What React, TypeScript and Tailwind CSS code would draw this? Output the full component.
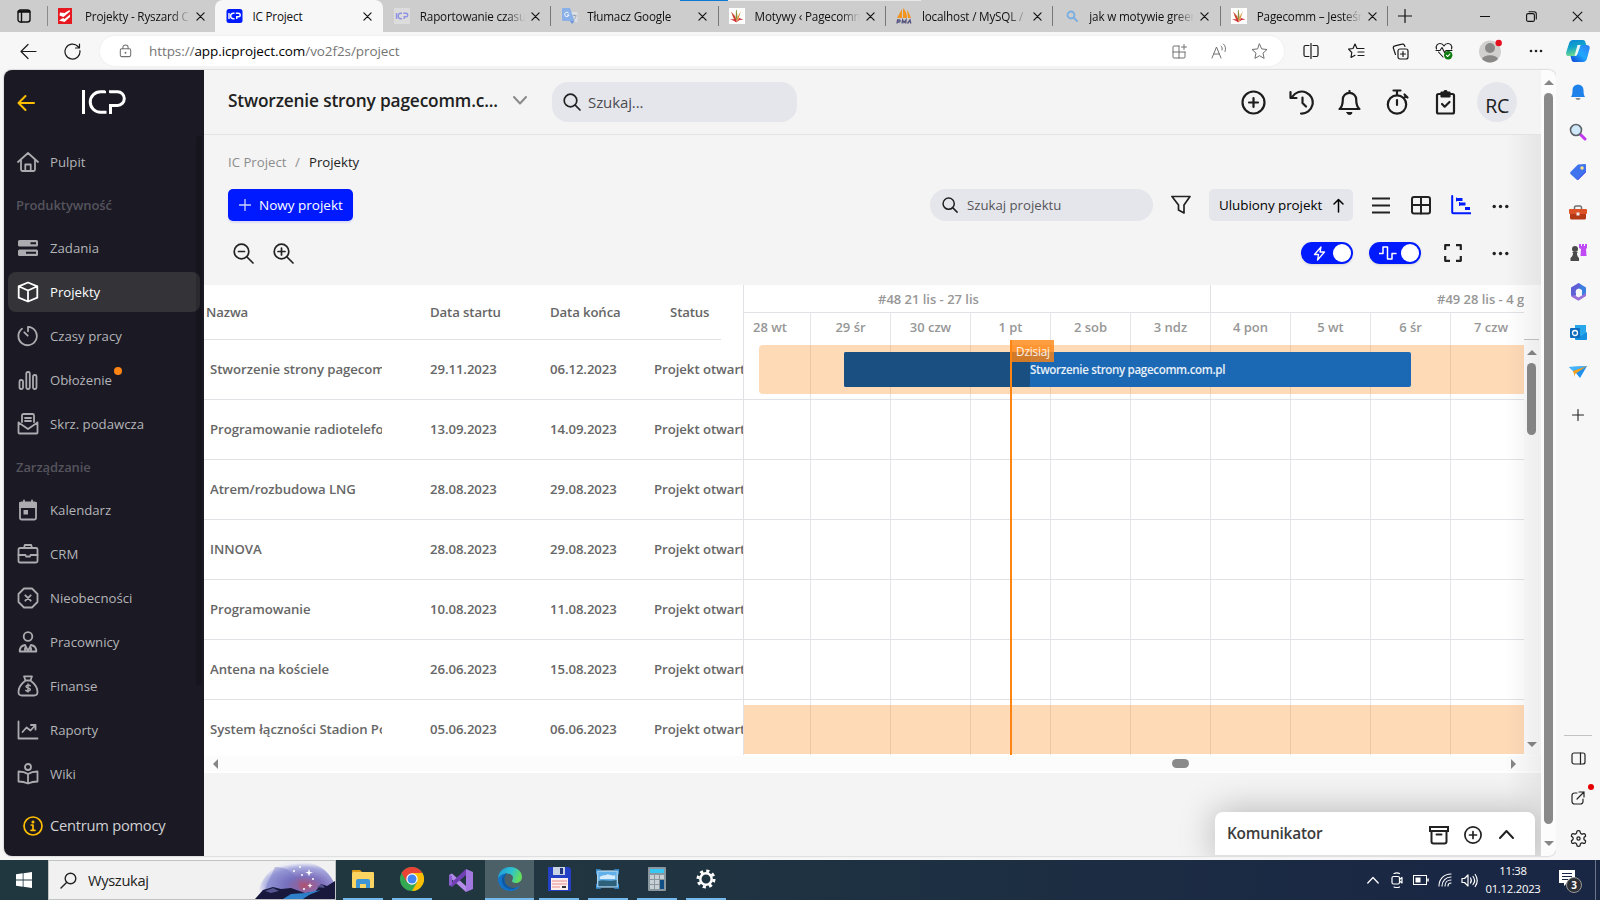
import type { ReactNode } from 'react';

type IconProps = { size?: number; w?: number; vb?: number; className?: string; children: ReactNode };

function Icon({ size = 24, w = 2, vb = 24, className = '', children }: IconProps) {
  return (
    <svg
      width={size}
      height={size}
      viewBox={`0 0 ${vb} ${vb}`}
      fill="none"
      stroke="currentColor"
      strokeWidth={w}
      strokeLinecap="round"
      strokeLinejoin="round"
      className={`shrink-0 ${className}`}
    >
      {children}
    </svg>
  );
}

const Close = ({ size = 10, w = 1.3 }: { size?: number; w?: number }) => (
  <Icon size={size} vb={10} w={w}>
    <path d="M1 1l8 8M9 1l-8 8" />
  </Icon>
);

function Bird() {
  return (
    <svg width="16" height="16" viewBox="0 0 16 16" className="shrink-0">
      <rect width="16" height="16" fill="#fff" />
      <path d="M2 3.500l4 4.500 1.500 4-1 2L4 9z" fill="#c8452f" />
      <path d="M7 1.500l.8 1L8.500 9l-.8 4-1-4z" fill="#8a8f3c" />
      <path d="M12 3l-3 9-1.500 2 1-5z" fill="#e0902c" />
      <path d="M1 11l6 .500 1 3-3-1.500zM8 14l2-4 4.500 1.500-4 .5z" fill="#d02c2c" />
    </svg>
  );
}

function IcpMark({ stroke }: { stroke: string }) {
  return (
    <g fill="none" stroke={stroke} strokeWidth="1.400">
      <path d="M2.500 5v6M8 5.200H6.900a2.800 2.800 0 000 5.600H8M9.300 5.200h2.600a1.800 1.800 0 010 3.600h-1.700V11" />
    </g>
  );
}

const favicons: Record<string, ReactNode> = {
  red: (
    <svg width="15" height="16" viewBox="0 0 15 16" className="-ml-[2px] shrink-0">
      <rect width="14" height="16" fill="#e5191f" />
      <path d="M1.500 7.500l4 1.500L12 3.500 11.500 2 6.500 5 2 4.500zM1 12.500l4-2.500 1.500 1L12 6.500V9l-5.500 5z" fill="#fff" />
    </svg>
  ),
  icp: (
    <svg width="17" height="14" viewBox="0 1 16 14" className="-ml-px shrink-0">
      <rect y="1" width="16" height="14" rx="2.500" fill="#001aff" />
      <IcpMark stroke="#fff" />
    </svg>
  ),
  icpFaded: (
    <svg width="16" height="16" viewBox="0 0 16 16" className="shrink-0">
      <rect width="16" height="16" fill="#dcdcdc" />
      <IcpMark stroke="#8f93e0" />
    </svg>
  ),
  translate: (
    <svg width="16" height="16" viewBox="0 0 16 16" className="shrink-0">
      <path d="M6 4h9.500v10H10z" fill="#dcdfe3" />
      <path d="M1 0h7l4.500 13H1.500A1.500 1.500 0 010 11.500V1a1 1 0 011-1z" fill="#8ab0ea" />
      <path d="M8 13h4.500L10 16z" fill="#6f93d6" />
      <path d="M6.800 5.400A2.200 2.200 0 107 7H5" stroke="#fff" fill="none" />
      <path d="M10.800 7.500h3.700M12.500 6.500v1M14 8c-.5 2-1.500 3-2 3.500" stroke="#9aa7b5" fill="none" />
    </svg>
  ),
  bird: <Bird />,
  pma: (
    <svg width="16" height="16" viewBox="0 0 16 16" className="shrink-0">
      <path d="M6 1v9H1zM7 0c3 3 4 6 4 10H7zM11 2c2 3 3 5 4 8h-3z" fill="#f3941f" />
      <path d="M1 15.500l.6-3.500h1.600c1.500 0 1.300 2-.4 2H1.500M6 15.500l.6-3.500 1.400 2.500 2-2.500-.2 3.500M11.500 15.500l2.500-3.500.8 3.500" stroke="#54517c" strokeWidth="1.300" fill="none" />
    </svg>
  ),
  search: (
    <Icon size={12} vb={12} w={1.8} className="mx-[2px] text-[#78aee0]">
      <circle cx="5" cy="5" r="3.500" />
      <path d="M8 8l3 3" />
    </Icon>
  ),
};

const tabs = [
  { icon: 'red', title: 'Projekty - Ryszard Ceglarz' },
  { icon: 'icp', title: 'IC Project', active: true },
  { icon: 'icpFaded', title: 'Raportowanie czasu pracy' },
  { icon: 'translate', title: 'Tłumacz Google' },
  { icon: 'bird', title: 'Motywy ‹ Pagecomm' },
  { icon: 'pma', title: 'localhost / MySQL / baza' },
  { icon: 'search', title: 'jak w motywie green' },
  { icon: 'bird', title: 'Pagecomm – Jesteśmy' },
];

function TabStrip() {
  return (
    <div className="relative flex h-8 shrink-0 bg-[#cdcdcd] text-[#111]">
      <div className="flex w-[47px] items-center justify-center">
        <Icon size={14} vb={14} w={1.4}>
          <rect x="1" y="1" width="12" height="12" rx="2.500" />
          <path d="M1 3h12M4.500 3v10M1.500 2h11" />
        </Icon>
      </div>
      <div className="mt-[6px] h-5 w-px bg-[#8a8a8a]" />
      {tabs.map((t, i) => (
        <div
          key={i}
          className={`flex h-8 w-[167.400px] shrink-0 items-center pl-[11.500px] ${
            t.active ? 'rounded-t-lg bg-[#f7f7f7]' : ''
          } ${i > 1 ? 'relative' : ''}`}
        >
          <span className="flex w-[25.500px] shrink-0 items-center">{favicons[t.icon]}</span>
          <span
            className={`w-[105px] overflow-hidden whitespace-nowrap text-[11.700px] leading-5 tracking-[-0.180px] ${
              t.active ? '' : '[mask-image:linear-gradient(90deg,#000_82%,transparent)]'
            }`}
          >
            {t.title}
          </span>
          <span className="ml-[6px]">
            <Close size={9} />
          </span>
          {i > 1 && <span className="absolute -right-px top-[6px] h-5 w-px bg-[#777]" />}
        </div>
      ))}
      <div className="ml-[11px] flex items-center">
        <Icon size={14} vb={14} w={1.2}>
          <path d="M7 .5v13M.5 7h13" />
        </Icon>
      </div>
      <div className="ml-auto flex items-center">
        <span className="flex w-[46px] justify-center">
          <Icon size={10} vb={10} w={1}>
            <path d="M0 5.500h10" />
          </Icon>
        </span>
        <span className="flex w-[46px] justify-center">
          <Icon size={11} vb={11} w={1.1}>
            <rect x=".6" y="2.600" width="7.800" height="7.800" rx="1.500" />
            <path d="M3 .7h5a2.300 2.300 0 012.300 2.300v5" />
          </Icon>
        </span>
        <span className="flex w-[46px] justify-center">
          <Close size={11} w={1} />
        </span>
      </div>
      <div className="absolute left-[680px] top-0 flex h-px">
        <div className="w-12 bg-[#0b78d4]" />
        <div className="w-[193px] bg-[#e8e8e8]" />
      </div>
    </div>
  );
}

function Cell({ children, className = 'w-[45px]' }: { children: ReactNode; className?: string }) {
  return <span className={`flex shrink-0 items-center justify-center ${className}`}>{children}</span>;
}

function Toolbar() {
  return (
    <div className="flex h-[38px] shrink-0 items-center bg-[#f7f7f7] text-[#1a1a1a]">
      <Cell className="ml-[7px] w-[42px]">
        <Icon size={17} vb={17} w={1.200}>
          <path d="M16 8.500H1M8 1.500l-7 7 7 7" />
        </Icon>
      </Cell>
      <Cell className="w-[46px]">
        <Icon size={17} vb={17} w={1.200}>
          <path d="M15.900 7.500A7.500 7.500 0 1114 3.500l1 1M15.500 1v4h-4" />
        </Icon>
      </Cell>
      <div className="ml-[5px] flex h-[30px] w-[1184px] items-center rounded-full bg-white pl-[19px] pr-[5px] text-[#707070] shadow-[0_0_3px_rgba(0,0,0,0.060)]">
        <Icon size={16} vb={15} w={1.200} className="w-[13px]">
          <rect x="1.500" y="5" width="12" height="9" rx="1.500" />
          <path d="M4.500 5V3.200a3 2.600 0 016 0V5" />
          <circle cx="7.500" cy="9.500" r=".5" fill="currentColor" />
        </Icon>
        <span className="ml-[17px] text-[13.500px] leading-5 tracking-[-0.080px] text-[#757575]">
          https://<span className="text-black">app.icproject.com</span>/vo2f2s/project
        </span>
        <div className="ml-auto flex">
          <Cell className="w-10">
            <Icon size={15} vb={15} w={1}>
              <path d="M7 2H2a1 1 0 00-1 1v10a1 1 0 001 1h10a1 1 0 001-1V8M1 8h12M7 2v12M12 .5v5M9.500 3h5" />
            </Icon>
          </Cell>
          <Cell className="w-10">
            <Icon size={16} vb={16} w={1}>
              <path d="M1 15L5.500 4 10 15M2.600 11h5.800M10 3c1.200 1 1.500 2.500 1 4M12.500 1c2.200 2 2.500 5 1.500 7.500" />
            </Icon>
          </Cell>
          <Cell className="w-10">
            <Icon size={17} vb={17} w={1}>
              <path d="M8.500 1l2.200 4.900 5.300.6-4 3.600 1.100 5.300-4.600-2.700-4.600 2.700L5 10.100 1 6.500l5.300-.6z" />
            </Icon>
          </Cell>
        </div>
      </div>
      <div className="ml-[4.500px] flex items-center">
        <Cell>
          <Icon size={16} vb={16} w={1.200}>
            <path d="M6 2.500H2.500A1.500 1.500 0 001 4v8a1.500 1.500 0 001.500 1.500H6M10 2.500h3.500A1.500 1.500 0 0115 4v8a1.500 1.500 0 01-1.500 1.500H10M8 .5v15" />
          </Icon>
        </Cell>
        <Cell>
          <Icon size={17} vb={17} w={1.200}>
            <path d="M9 5.500L7 1 5 5.500l-4.500.6L3.800 9.500 3 14.500l4-2.200M9 5.500h7M10 9h6M10 12.500h6" />
          </Icon>
        </Cell>
        <Cell className="w-[43px]">
          <Icon size={17} vb={17} w={1.200}>
            <rect x="6" y="6" width="10" height="10" rx="2" />
            <path d="M11 8.500v5M8.500 11h5M13 3.500l-.6-1.300a2 2 0 00-2.300-1L3 2.800A2 2 0 001.300 5L3.500 11.500" />
          </Icon>
        </Cell>
        <Cell>
          <Icon size={18} vb={18} w={1.100}>
            <path d="M1.500 7C.3 3.500 3 1.500 5 1.500c2 0 3.500 1.500 4 2.500.5-1 2-2.500 4-2.500s4.700 2 3.500 5.500M3.500 10L8 15M1 8.500h4l2-3 2.500 5 1.500-2h6" />
            <circle cx="13.200" cy="13.200" r="4.200" fill="#107c10" stroke="none" />
            <path d="M11.500 13.300l1.200 1.200 2.200-2.400" stroke="#fff" />
          </Icon>
        </Cell>
        <Cell className="w-[47px]">
          <svg width="24" height="24" viewBox="0 0 24 24">
            <circle cx="12" cy="12.500" r="11" fill="#d2d0ce" />
            <circle cx="12" cy="9" r="5" fill="#8a8886" />
            <path d="M4 20a8.500 5.500 0 0116 0 11 11 0 01-16 0z" fill="#8a8886" />
            <circle cx="20.700" cy="4" r="3.200" fill="#e60f1f" />
          </svg>
        </Cell>
        <Cell>
          <svg width="14" height="4" viewBox="0 0 14 4" fill="#222">
            <circle cx="2" cy="2" r="1.300" />
            <circle cx="7" cy="2" r="1.300" />
            <circle cx="12" cy="2" r="1.300" />
          </svg>
        </Cell>
        <Cell className="ml-[7px] w-6">
          <svg width="24" height="24" viewBox="0 0 24 24">
            <defs>
              <linearGradient id="cpA" x1="0" y1="0" x2="0.300" y2="1">
                <stop offset="0" stopColor="#0a84d8" />
                <stop offset=".5" stopColor="#12a5c9" />
                <stop offset="1" stopColor="#6fdc8c" />
              </linearGradient>
              <linearGradient id="cpB" x1="1" y1="0" x2="0" y2="1">
                <stop offset="0" stopColor="#2f7bf0" />
                <stop offset=".5" stopColor="#21a8ff" />
                <stop offset="1" stopColor="#0b3fd0" />
              </linearGradient>
            </defs>
            <path d="M7 1h10c1.500 0 2.200 1 2.700 3l.6 2h-6l-3 8.500c-.7 2-1.500 2.500-3.500 2.500H3c-2.500 0-3.300-1.500-2.700-4L3 4.500C3.600 2.300 5 1 7 1z" fill="url(#cpA)" />
            <path d="M17 23H8c-1.500 0-2.200-1-2.700-3l-.8-3H8c2 0 2.800-.5 3.500-2.500l3-8.500h6c2.500 0 3.800 1.500 3 4L21 19.500c-.6 2.200-2 3.500-4 3.500z" fill="url(#cpB)" />
            <path d="M14.500 6h-3L8.500 17c1.800-.1 2.400-.7 3-2.500z" fill="#fff" opacity=".9" />
          </svg>
        </Cell>
      </div>
    </div>
  );
}

const navIcons: Record<string, ReactNode> = {
  Pulpit: <path d="M1 11L11 2l10 9M4 9v9.500A1.500 1.500 0 005.500 20h11a1.500 1.500 0 001.500-1.500V9M8.300 20v-6.500h5.400V20" />,
  Zadania: (
    <g>
      <rect x="1" y="3" width="20" height="6.500" rx="1.500" fill="currentColor" stroke="none" />
      <rect x="1" y="12.500" width="20" height="6.500" rx="1.500" fill="currentColor" stroke="none" />
      <path d="M13.500 6.300h5.500M9 15.700h10" stroke="#1a1924" strokeWidth="2" strokeLinecap="butt" />
    </g>
  ),
  Projekty: <path d="M11 1.500l9.300 3.800v11.400L11 20.500l-9.300-3.800V5.300zM1.700 5.300L11 9.500l9.300-4.200M11 9.500v11" />,
  'Czasy pracy': <path d="M5 3.700A9.200 9.200 0 1011 1.800v4.500M7.300 7.300l3.400 3.400" />,
  Obłożenie: (
    <g>
      <rect x="2.500" y="11" width="3.500" height="9" rx="1.500" />
      <rect x="9.300" y="3" width="3.500" height="17" rx="1.500" />
      <rect x="16" y="6" width="3.500" height="14" rx="1.500" />
    </g>
  ),
  'Skrz. podawcza': <path d="M5 9V2.500A1.500 1.500 0 016.500 1h9A1.500 1.500 0 0117 2.500V9M8 5h6M8 8h6M1.500 9.500v10a1 1 0 001 1h17a1 1 0 001-1v-10M1.500 9.500L11 16l9.500-6.500" />,
  Kalendarz: (
    <g>
      <rect x="3" y="3.500" width="16" height="17" rx="1.500" />
      <path d="M3 4h16v4H3zM7 1.500V4M15 1.500V4" fill="currentColor" />
      <rect x="6.500" y="11" width="4.500" height="4.500" fill="currentColor" stroke="none" />
    </g>
  ),
  CRM: (
    <g>
      <rect x="1.500" y="5" width="19" height="14.500" rx="1.500" />
      <path d="M7 5l.8-3h6.400l.8 3M1.500 12h7M13.500 12h7M9 13.500h4" />
    </g>
  ),
  Nieobecności: <path d="M7 1.500h8L20.500 7v8L15 20.500H7L1.500 15V7zM8.300 8.300l5.400 5.400M13.700 8.300l-5.400 5.400" />,
  Pracownicy: (
    <g>
      <circle cx="11" cy="5.500" r="4.300" />
      <path d="M8 14c-3 .5-5.300 3-5.300 6.500h16.600c0-3.500-2.300-6-5.300-6.500M8 14l3 6 3-6M8 17v3M14 17v3" />
    </g>
  ),
  Finanse: (
    <g>
      <path d="M7 1.300h8l-1.500 4.200h-5zM8.500 5.500C4 9 1.500 13 1.500 17c0 2.500 1.300 3.500 3.500 3.500h12c2.200 0 3.500-1 3.500-3.500 0-4-2.500-8-7-11.500" />
      <path d="M13.200 10.800c-1-1-4.200-1-4.200.8 0 2 4.300 1 4.300 3 0 1.900-3.300 1.900-4.500.8M11 9v8" strokeWidth="1.500" />
    </g>
  ),
  Raporty: <path d="M1.500 2.500v17h19M5.500 13l4-4.500 4 3L18.500 6M14 6h4.500v4.500" />,
  Wiki: (
    <g>
      <circle cx="11" cy="4" r="3" />
      <path d="M11 11C8 9 5 8.500 1.500 8.500v10c3.500 0 6.500.6 9.500 2 3-1.400 6-2 9.500-2v-10c-3.500 0-6.500.5-9.500 2.500zM11 11v9" />
    </g>
  ),
};

function NavItem({ label, active, dot }: { label: string; active?: boolean; dot?: boolean }) {
  return (
    <div
      className={`mb-1 flex h-10 shrink-0 items-center rounded-lg pl-[9px] ${
        active ? 'bg-[#333338] text-white' : 'text-[#b4b4b7]'
      }`}
    >
      <Icon size={22} vb={22} w={1.800} className={active ? '' : 'text-[#acacb0]'}>
        {navIcons[label]}
      </Icon>
      <span className="relative ml-[11px] text-[13.200px] leading-5">
        {label}
        {dot && <span className="absolute -right-[10px] -top-[3px] h-2 w-2 rounded-full bg-[#ff8412]" />}
      </span>
    </div>
  );
}

function NavHeading({ children }: { children: ReactNode }) {
  return (
    <div className="-mt-1 flex h-[46px] shrink-0 items-center pl-2 pt-[2px] text-[13px] font-semibold tracking-[-0.080px] text-[#55545d]">
      {children}
    </div>
  );
}

function Sidebar() {
  return (
    <aside className="flex w-[200px] shrink-0 flex-col bg-[#1a1924]">
      <div className="flex h-16 shrink-0 items-center pl-[12.500px] pt-[2px]">
        <Icon size={18} vb={18} w={2} className="text-[#ffbf00]">
          <path d="M17 9H1.500M8.500 2l-7 7 7 7" />
        </Icon>
        <svg width="46" height="26" viewBox="0 0 46 26" className="-mt-[2px] ml-[46.500px]" fill="none" stroke="#fff" strokeWidth="3">
          <path d="M2.500 1V25M25.500 23.300h-6a10.200 10.200 0 010-20.500h5.500M28 2.800h8.500a6.800 6.800 0 010 13.600h-7V25" />
          <path d="M24 0l5 6" stroke="#1a1924" strokeWidth="1.500" />
        </svg>
      </div>
      <div className="flex min-h-0 flex-1 pl-1">
        <nav className="flex w-[192px] shrink-0 flex-col pt-2">
          <NavItem label="Pulpit" />
          <NavHeading>Produktywność</NavHeading>
          <NavItem label="Zadania" />
          <NavItem label="Projekty" active />
          <NavItem label="Czasy pracy" />
          <NavItem label="Obłożenie" dot />
          <NavItem label="Skrz. podawcza" />
          <NavHeading>Zarządzanie</NavHeading>
          <NavItem label="Kalendarz" />
          <NavItem label="CRM" />
          <NavItem label="Nieobecności" />
          <NavItem label="Pracownicy" />
          <NavItem label="Finanse" />
          <NavItem label="Raporty" />
          <NavItem label="Wiki" />
        </nav>
        <div className="-ml-1 mt-[2px] h-[549px] w-[6px] shrink-0 rounded-full bg-black/15" />
      </div>
      <div className="flex h-[60px] shrink-0 items-center pl-[19px] text-[#d0d0d3]">
        <Icon size={20} vb={20} w={1.700} className="text-[#ffbf00]">
          <circle cx="10" cy="10" r="9" />
          <path d="M8.300 9H10v5M8 14.300h4" />
          <circle cx="10" cy="6" r=".7" fill="currentColor" />
        </Icon>
        <span className="-mt-[2px] ml-[7px] text-[14.700px] leading-5 tracking-[-0.250px]">Centrum pomocy</span>
      </div>
    </aside>
  );
}

function Magnifier({ size, w = 1.7 }: { size: number; w?: number }) {
  return (
    <Icon size={size} vb={18} w={w} className="text-[#222]">
      <circle cx="7.500" cy="7.500" r="6.300" />
      <path d="M12.200 12.200L17 17" />
    </Icon>
  );
}

function AppHeader() {
  return (
    <header className="flex h-[65px] shrink-0 items-center border-b border-[#e3e3e6] bg-[#f4f4f4] pl-6 text-[#1d1d1d]">
      <h1 className="w-[270px] whitespace-nowrap pb-[2px] text-[17.300px] font-semibold leading-6 tracking-[-0.160px] text-[#212121]">
        Stworzenie strony pagecomm.c...
      </h1>
      <Icon size={14} vb={14} w={2} className="-mt-[4px] ml-[15px] text-[#8b8b8b]">
        <path d="M1 4l6 6.500L13 4" />
      </Icon>
      <div className="ml-[25px] flex h-10 w-[245px] items-center rounded-[16px] bg-[#e5e6eb] pl-[11px] text-[15px] tracking-[-0.100px] text-[#4b4b50]">
        <Magnifier size={18} />
        <span className="ml-[7px] pt-px">Szukaj...</span>
      </div>
      <div className="ml-auto flex items-center pr-6">
        <Cell className="w-12">
          <Icon size={25} vb={25} w={2.200}>
            <circle cx="12.500" cy="12.500" r="11" />
            <path d="M12.500 8v9M8 12.500h9" />
          </Icon>
        </Cell>
        <Cell className="w-12">
          <Icon size={25} vb={25} w={2.200}>
            <path d="M3.500 6.500A11 11 0 1112 23.500M1.500 2v6h6M13.500 7.500v5.500l3.500 3.500" />
          </Icon>
        </Cell>
        <Cell className="w-12">
          <Icon size={25} vb={25} w={2.200}>
            <path d="M2.500 19h20c-2.500-2-3.300-4.500-3.300-9.500a6.700 6.700 0 00-13.400 0c0 5-.8 7.500-3.300 9.500zM12.500 1v1.500" />
            <path d="M10 22.500h5a2.500 2 0 01-5 0z" fill="currentColor" strokeWidth="1" />
          </Icon>
        </Cell>
        <Cell className="w-12">
          <Icon size={26} vb={26} w={2.200}>
            <circle cx="13" cy="15.500" r="9.200" />
            <path d="M9.500 1.500h7M13 2v4M13 11v5M20 9l2-2M20.500 5.500l3 3" />
          </Icon>
        </Cell>
        <Cell className="w-12">
          <Icon size={25} vb={25} w={2.200}>
            <rect x="4" y="4" width="17" height="19.500" rx="1.500" />
            <rect x="8.500" y="2.500" width="8" height="4" fill="currentColor" />
            <circle cx="12.500" cy="2" r="1" />
            <path d="M9 14l2.700 2.700L16.500 12" />
          </Icon>
        </Cell>
        <span className="ml-2 flex h-10 w-10 items-center justify-center rounded-full bg-[#e5e6eb] pt-2 text-[19.500px] leading-8 tracking-[-0.300px]">
          RC
        </span>
      </div>
    </header>
  );
}

const Dots = () => (
  <svg width="17" height="5" viewBox="0 0 17 5" fill="#222" className="shrink-0">
    <circle cx="2.200" cy="2.500" r="1.700" />
    <circle cx="8.500" cy="2.500" r="1.700" />
    <circle cx="14.800" cy="2.500" r="1.700" />
  </svg>
);

function Toggle({ children }: { children: ReactNode }) {
  return (
    <span className="flex h-[22px] w-[52px] items-center justify-end rounded-full bg-[#001aff] pr-[2px] text-white shadow-sm">
      {children}
      <span className="h-[18px] w-[18px] rounded-full bg-white" />
    </span>
  );
}

function Controls() {
  return (
    <div className="flex h-[150px] shrink-0 flex-col bg-[#f4f4f4] text-[13.200px] text-[#222]">
      <div className="mt-[18px] flex h-5 items-center pl-6">
        <span className="w-[67px] text-[#8c8c8c]">IC Project</span>
        <span className="w-[14px] text-[#8c8c8c]">/</span>
        <span>Projekty</span>
      </div>
      <div className="mt-[16px] flex h-8 items-center pl-6">
        <button className="flex h-8 w-[125px] items-center rounded-[5px] bg-[#001aff] pl-[11px] text-[13.500px] text-white shadow-[0_2px_2px_rgba(0,20,255,0.100)]">
          <Icon size={12} vb={12} w={1.300} className="opacity-80">
            <path d="M6 .5v11M.5 6h11" />
          </Icon>
          <span className="ml-2 whitespace-nowrap pt-px">Nowy projekt</span>
        </button>
        <div className="ml-[577px] flex h-8 w-[223px] items-center rounded-full bg-[#e5e6eb] pl-3 text-[#55555a]">
          <Magnifier size={16} />
          <span className="ml-[9px] pt-[2px]">Szukaj projektu</span>
        </div>
        <Cell className="w-14">
          <Icon size={20} vb={20} w={1.700}>
            <path d="M1 1.500h18l-6 8.500v8L7.500 15v-5z" />
          </Icon>
        </Cell>
        <div className="flex h-8 w-[144px] items-center rounded-[5px] bg-[#e5e6eb] pl-[10px] text-[13.400px] text-black">
          <span className="whitespace-nowrap pt-px tracking-[-0.040px]">Ulubiony projekt</span>
          <Icon size={15} vb={15} w={1.500} className="ml-auto mr-[7px]">
            <path d="M7.500 14V1.500M3 6l4.500-4.500L12 6" />
          </Icon>
        </div>
        <Cell className="ml-[7.500px] w-10">
          <svg width="18" height="18" viewBox="0 0 18 18" stroke="#222" strokeWidth="2.200">
            <path d="M0 2.500h18M0 9.500h18M0 16.500h18" />
          </svg>
        </Cell>
        <Cell className="w-10">
          <Icon size={20} vb={20} w={2}>
            <rect x="1" y="2" width="18" height="16.500" rx="2" />
            <path d="M10 2v16.500M1 10h18" />
          </Icon>
        </Cell>
        <Cell className="w-10">
          <Icon size={20} vb={20} w={2} className="text-[#001aff]">
            <path d="M1.200 1v16.300a1 1 0 001 1H20" />
            <path d="M5.500 4.500h6M8.500 9h6M14 13.500h5" strokeWidth="2.800" strokeLinecap="butt" />
            <path d="M5.500 3v3M8.500 7.500v3" strokeWidth="1" />
          </Icon>
        </Cell>
        <Cell className="w-10">
          <span className="pt-[2px]">
            <Dots />
          </span>
        </Cell>
      </div>
      <div className="mt-[16px] flex h-8 items-center pl-[19.500px]">
        <Cell className="w-10">
          <Icon size={21} vb={21} w={1.700}>
            <circle cx="8.500" cy="8.500" r="7.300" />
            <path d="M14 14l6 6M5.500 8.500h6" />
          </Icon>
        </Cell>
        <Cell className="w-10">
          <Icon size={21} vb={21} w={1.700}>
            <circle cx="8.500" cy="8.500" r="7.300" />
            <path d="M14 14l6 6M5 8.500h7M8.500 5v7" />
          </Icon>
        </Cell>
        <div className="ml-auto flex items-center gap-4 pr-8">
          <Toggle>
            <Icon size={15} vb={15} w={1.300} className="mr-[6px]">
              <path d="M9 1L2.500 8.500h4L5.500 14l7-8H8z" />
            </Icon>
          </Toggle>
          <Toggle>
            <Icon size={18} vb={18} w={1.500} className="mr-[4px]">
              <path d="M0 9.500h4V3h4.500v12H13V9.500h4" />
            </Icon>
          </Toggle>
          <Icon size={18} vb={18} w={2.200} className="ml-[7px]">
            <path d="M1.200 6V1.200H6M12 1.200h4.800V6M16.800 12v4.800H12M6 16.800H1.200V12" strokeLinecap="butt" />
          </Icon>
          <span className="ml-[14px] pt-px">
            <Dots />
          </span>
        </div>
      </div>
    </div>
  );
}

const projects = [
  ['Stworzenie strony pagecomm.com.pl', '29.11.2023', '06.12.2023'],
  ['Programowanie radiotelefonów', '13.09.2023', '14.09.2023'],
  ['Atrem/rozbudowa LNG', '28.08.2023', '29.08.2023'],
  ['INNOVA', '28.08.2023', '29.08.2023'],
  ['Programowanie', '10.08.2023', '11.08.2023'],
  ['Antena na kościele', '26.06.2023', '15.08.2023'],
  ['System łączności Stadion Poznań', '05.06.2023', '06.06.2023'],
];

function ProjectTable() {
  return (
    <div className="flex h-[470px] w-[539px] shrink-0 flex-col overflow-hidden text-[13.200px] font-semibold tracking-[-0.050px] text-[#666]">
      <div className="flex h-[55px] w-[517px] shrink-0 items-center border-b border-[#e2e2e6] pl-[2px] pt-px tracking-[-0.120px]">
        <span className="w-[224px] shrink-0">Nazwa</span>
        <span className="w-[120px] shrink-0">Data startu</span>
        <span className="w-[120px] shrink-0">Data końca</span>
        <span>Status</span>
      </div>
      {projects.map(([name, start, end]) => (
        <div
          key={name}
          className="flex h-[60px] shrink-0 items-center whitespace-nowrap border-b border-[#e2e2e6] pl-[6px] pt-px"
        >
          <span className="w-[172px] shrink-0 overflow-hidden">{name}</span>
          <span className="ml-12 w-[120px] shrink-0 tracking-[-0.080px]">{start}</span>
          <span className="w-[104px] shrink-0 tracking-[-0.080px]">{end}</span>
          <span className="shrink-0">Projekt otwarty</span>
        </div>
      ))}
    </div>
  );
}

const days = ['29 śr', '30 czw', '1 pt', '2 sob', '3 ndz', '4 pon', '5 wt', '6 śr'];

function Gantt() {
  return (
    <div className="relative flex h-[470px] w-[781px] shrink-0 flex-col overflow-hidden border-l border-[#e2e2e6] text-[13px] font-semibold tracking-[-0.020px] text-[#979797]">
      <div className="flex h-7 shrink-0 items-center whitespace-nowrap border-b border-[#e2e2e6]">
        <div className="flex h-full w-[467px] shrink-0 items-center border-r border-[#e2e2e6] pl-[134px] pt-[2px]">
          #48 21 lis - 27 lis
        </div>
        <span className="shrink-0 pl-[226px] pt-[2px]">#49 28 lis - 4 gru</span>
      </div>
      <div className="flex flex-1">
        <div className="w-[67px] shrink-0 border-r border-[#e5e5e8] pl-[9px] pt-[5px]">28 wt</div>
        {days.map((d) => (
          <div key={d} className="w-20 shrink-0 border-r border-[#e5e5e8] pt-[5px] text-center">
            {d}
          </div>
        ))}
        <div className="w-20 shrink-0 pt-[5px] text-center">7 czw</div>
      </div>
      <div className="absolute inset-x-0 top-[55px] flex flex-col">
        {projects.map(([name]) => (
          <div key={name} className="h-[60px] shrink-0 border-b border-[#e2e2e6]" />
        ))}
      </div>
      <div className="absolute left-[15px] top-[60px] h-[49px] w-[770px] rounded-[4px] bg-[#ff8412]/30" />
      <div className="absolute left-0 top-[420px] h-[49px] w-[785px] bg-[#ff8412]/30" />
      <div className="absolute left-[100px] top-[67px] flex h-[35px] w-[567px] items-center overflow-hidden rounded-[2px] bg-[#1b69b4] text-[11.600px] font-semibold tracking-[-0.350px] text-white/90">
        <div className="h-full w-[186px] bg-[#1a4f81]" />
        <span>Stworzenie strony pagecomm.com.pl</span>
      </div>
      <div className="absolute left-[266px] top-[55px] flex h-[415px]">
        <div className="w-[2px] bg-[#ff8412]" />
        <div className="flex h-[22px] w-[42px] items-center justify-center bg-[#ff8412]/80 pt-[2px] text-[11.800px] font-normal tracking-[-0.200px] text-white/90">
          Dzisiaj
        </div>
      </div>
    </div>
  );
}

const Arrow = ({ dir }: { dir: 'up' | 'down' | 'left' | 'right' }) => {
  const d = { up: 'M0 7l5-5 5 5z', down: 'M0 3l5 5 5-5z', left: 'M7 0L2 5l5 5z', right: 'M3 0l5 5-5 5z' }[dir];
  return (
    <svg width="10" height="10" viewBox="0 0 10 10" fill="#868686" className="shrink-0">
      <path d={d} />
    </svg>
  );
};

function Messenger() {
  return (
    <div className="absolute bottom-0 right-[6px] flex h-[44px] w-[320px] items-center rounded-t-[8px] border-b border-[#e0e0e0] bg-white pl-3 text-[#222] shadow-[0_0_36px_rgba(0,0,0,0.280)]">
      <span className="flex-1 text-[15.400px] font-semibold tracking-[-0.200px] text-[#3c3c3c]">Komunikator</span>
      <Icon size={20} vb={20} w={2} className="mt-[2px]">
        <path d="M1 2h18v4H1zM2.500 6v10.500a2 2 0 002 2h11a2 2 0 002-2V6M7.500 9.500h5" strokeLinejoin="miter" />
      </Icon>
      <Icon size={18} vb={18} w={1.700} className="ml-[15px] mt-[2px]">
        <circle cx="9" cy="9" r="8.100" />
        <path d="M9 5.500v7M5.500 9h7" />
      </Icon>
      <Icon size={15} vb={15} w={2} className="ml-[17px] mr-[21px] mt-[2px]">
        <path d="M1 11l6.500-7L14 11" />
      </Icon>
    </div>
  );
}

function RailCell({ children, className = 'h-10' }: { children: ReactNode; className?: string }) {
  return <div className={`flex shrink-0 items-center justify-center ${className}`}>{children}</div>;
}

function EdgeRail() {
  return (
    <div className="flex w-11 shrink-0 flex-col bg-[#f7f7f7] pt-[2px] text-[#222]">
      <RailCell>
        <svg width="16" height="18" viewBox="0 0 16 18">
          <path d="M1 14c1-1.500 1.500-3 1.500-7A5.500 5.500 0 0113.500 7c0 4 .5 5.500 1.500 7z" fill="#1f82ea" />
          <path d="M5.500 15h5a2.500 2 0 01-5 0z" fill="#8a8a8a" />
        </svg>
      </RailCell>
      <RailCell>
        <svg width="18" height="18" viewBox="0 0 18 18">
          <path d="M11 11l5 5" stroke="#c238f0" strokeWidth="3" strokeLinecap="round" />
          <circle cx="7" cy="7" r="5.500" fill="#cfe9fb" stroke="#5d6168" strokeWidth="1.600" />
        </svg>
      </RailCell>
      <RailCell>
        <svg width="18" height="18" viewBox="0 0 18 18">
          <path d="M9 1.500L16 1a1 1 0 011 1v7L9.500 16.500a1.500 1.500 0 01-2 0L1.500 11a1.500 1.500 0 010-2z" fill="#3f74ee" />
          <path d="M1 10l7 7 9-9v1L9.500 16.500a1.500 1.500 0 01-2 0z" fill="#4a3fe8" />
          <circle cx="13" cy="5" r="1.700" fill="#ffe08a" />
        </svg>
      </RailCell>
      <RailCell>
        <svg width="18" height="15" viewBox="0 0 18 15">
          <path d="M5.500 5V2.500A1.500 1.500 0 017 1h4a1.500 1.500 0 011.500 1.500V5" fill="none" stroke="#6e6e6e" strokeWidth="1.500" />
          <rect y="4" width="18" height="5" rx="1" fill="#dd5127" />
          <path d="M1 9h16v4a1.500 1.500 0 01-1.500 1.500h-13A1.500 1.500 0 011 13z" fill="#b43a17" />
          <rect x="7.500" y="7.500" width="3" height="3" fill="#eee" />
        </svg>
      </RailCell>
      <RailCell>
        <svg width="18" height="19" viewBox="0 0 18 19">
          <path d="M10 1h2v2h1V1h2v2h1V1h2v4l-1 1 .5 7h-6L12 6l-2-1z" fill="#c04bf5" />
          <circle cx="6" cy="6" r="3" fill="#4a4a4a" />
          <path d="M3 9h6l-1 1c0 3 1 4 2 5v3H1.500v-3c1-1 2.500-2 2.500-5z" fill="#4a4a4a" />
        </svg>
      </RailCell>
      <RailCell>
        <svg width="17" height="18" viewBox="0 0 17 18">
          <path d="M8.500 0L1 4.500v8L4.500 14.500 6 12V7l5-3V1.500z" fill="#5f5fd6" />
          <path d="M8.500 0L16 4.500v8L12 14V7L8 5l3-1.500z" fill="#3b7fe0" />
          <path d="M16 10v3l-7.500 4.800L1 13.500 4 12l4.500 2.500z" fill="#9a6fd8" />
          <circle cx="8.500" cy="9" r="2.800" fill="#f7f7f7" />
        </svg>
      </RailCell>
      <RailCell>
        <svg width="17" height="17" viewBox="0 0 17 17">
          <rect x="5" y="1" width="11" height="12" fill="#28a8ea" />
          <path d="M5 8l6 4 6-4v7a1 1 0 01-1 1H6a1 1 0 01-1-1z" fill="#1490df" />
          <rect y="4" width="10" height="10" rx="1" fill="#0f6cbd" />
          <circle cx="5" cy="9" r="2.500" fill="none" stroke="#fff" strokeWidth="1.300" />
        </svg>
      </RailCell>
      <RailCell>
        <svg width="18" height="14" viewBox="0 0 18 14">
          <path d="M0 2l18-1-7 12-4-5z" fill="#1e90f0" />
          <path d="M0 2l18-1L4 6z" fill="#45b4ff" />
          <path d="M4 6L18 1 6 9v3z" fill="#f2a11f" />
        </svg>
      </RailCell>
      <RailCell className="mt-[3px] h-10">
        <Icon size={12} vb={12} w={1.100}>
          <path d="M6 .5v11M.5 6h11" />
        </Icon>
      </RailCell>
      <div className="mx-2 mt-auto h-px bg-[#c2c2c2]" />
      <RailCell className="mt-[2px] h-10">
        <Icon size={15} vb={15} w={1.200}>
          <rect x="1" y="2" width="13" height="11" rx="2" />
          <path d="M9.500 2v11" />
        </Icon>
      </RailCell>
      <RailCell className="relative h-10">
        <Icon size={14} vb={14} w={1.200}>
          <path d="M6 2H3.500A2.500 2.500 0 001 4.500v6A2.500 2.500 0 003.500 13h6a2.500 2.500 0 002.500-2.500V8M8 1h5v5M13 1L6 8" />
        </Icon>
        <span className="absolute right-[6px] top-[6px] h-[6px] w-[6px] rounded-full bg-[#e60000]" />
      </RailCell>
      <RailCell className="mb-[2px] h-10">
        <Icon size={19} vb={24} w={1.600}>
          <path d="M12.200 2h-.4a2 2 0 00-2 2v.2a2 2 0 01-1 1.700l-.4.3a2 2 0 01-2 0l-.2-.1a2 2 0 00-2.700.7l-.2.4a2 2 0 00.7 2.700l.2.1a2 2 0 011 1.700v.5a2 2 0 01-1 1.800l-.2.1a2 2 0 00-.7 2.700l.2.400a2 2 0 002.700.7l.2-.1a2 2 0 012 0l.4.3a2 2 0 011 1.700v.2a2 2 0 002 2h.4a2 2 0 002-2v-.2a2 2 0 011-1.700l.4-.3a2 2 0 012 0l.2.1a2 2 0 002.700-.7l.2-.4a2 2 0 00-.7-2.700l-.2-.1a2 2 0 01-1-1.800v-.5a2 2 0 011-1.700l.2-.1a2 2 0 00.7-2.700l-.2-.4a2 2 0 00-2.700-.7l-.2.1a2 2 0 01-2 0l-.4-.3a2 2 0 01-1-1.700V4a2 2 0 00-2-2z" />
          <circle cx="12" cy="12" r="2" />
        </Icon>
      </RailCell>
    </div>
  );
}

function AppFrame() {
  return (
    <div className="ml-1 flex h-[786px] w-[1552px] overflow-hidden rounded-[8px] bg-[#f4f4f4] shadow-[0_0_2px_rgba(0,0,0,0.350)]">
      <Sidebar />
      <main className="relative flex w-[1337px] flex-col overflow-hidden">
        <AppHeader />
        <Controls />
        <div className="flex h-[488px] shrink-0 flex-col bg-white">
          <div className="flex h-[470px]">
            <ProjectTable />
            <Gantt />
            <div className="mt-[54px] flex w-[15px] flex-col items-center border-t border-[#c4c4c8] bg-[#fcfcfc] pt-2">
              <Arrow dir="up" />
              <div className="mt-[5px] h-[72px] w-[9px] rounded-full bg-[#8a8a8a]" />
              <div className="mb-[6px] mt-auto flex">
                <Arrow dir="down" />
              </div>
            </div>
          </div>
          <div className="mt-px flex h-[15px] items-center bg-[#fcfcfc] pl-[7px]">
            <Arrow dir="left" />
            <div className="ml-[951px] h-[9px] w-[17px] rounded-full bg-[#8a8a8a]" />
            <span className="ml-[319px] flex">
              <Arrow dir="right" />
            </span>
          </div>
        </div>
        <div className="pointer-events-none absolute bottom-0 right-0 top-[65px] w-9 bg-gradient-to-r from-transparent to-black/[0.060]" />
        <Messenger />
      </main>
      <div className="flex w-[15px] flex-col items-center bg-[#fcfcfc] pb-2 pt-[8px]">
        <Arrow dir="up" />
        <div className="mb-[14px] mt-[5px] w-[9px] flex-1 rounded-full bg-[#8a8a8a]" />
        <Arrow dir="down" />
      </div>
    </div>
  );
}

const taskIcons: ReactNode[] = [
  <svg width="22" height="18" viewBox="0 0 22 18">
    <path d="M0 1a1 1 0 011-1h7l2 2H0z" fill="#e09d18" />
    <rect y="2" width="22" height="16" rx="1" fill="#fcd462" />
    <path d="M4 18v-7a2 2 0 012-2h10a2 2 0 012 2v7h-4v-4H8v4z" fill="#3d95d6" />
  </svg>,
  <svg width="24" height="24" viewBox="0 0 24 24">
    <circle cx="12" cy="12" r="12" fill="#34a853" />
    <path d="M12 6h10.400A12 12 0 0112 24l5.200-9z" fill="#fbbc04" />
    <path d="M12 12L1.600 6A12 12 0 0122.400 6H12z" fill="#ea4335" />
    <path d="M1.600 6l5.200 9L12 6z" fill="#ea4335" />
    <circle cx="12" cy="12" r="5.700" fill="#fff" />
    <circle cx="12" cy="12" r="4.500" fill="#4285f4" />
  </svg>,
  <svg width="24" height="23" viewBox="0 0 24 23">
    <path d="M0 6l3-1.500L17 17v6L3 10.500V13L0 16z" fill="#b48be8" />
    <path d="M0 16l3 2L17 6V0L3 13z" fill="#7240b5" />
    <path d="M0 6l3 1v9l-3 .5z" fill="#8c5fd0" />
    <path d="M17 0l7 3v17l-7 3z" fill="#a277e0" />
  </svg>,
  <svg width="24" height="24" viewBox="0 0 24 24">
    <defs>
      <linearGradient id="edgeTop" x1="0" y1="0" x2="1" y2="0.300">
        <stop offset="0" stopColor="#1f95d8" />
        <stop offset=".6" stopColor="#2dc3cf" />
        <stop offset="1" stopColor="#63dc5f" />
      </linearGradient>
    </defs>
    <path d="M0 12C0 5 5 0 12 0s12 4.500 12 10c0 3.500-2.500 6-6 6-3 0-4-1.200-4-2s1-1.500 1-3.500S12.500 6.500 9 6.500 1 9 0 12z" fill="url(#edgeTop)" />
    <path d="M0 12c1-3.500 5-5.500 9-5.500-2.500 1.500-3.500 5-2.500 8.500 1.500 5 7 7.500 12 5.500 2-.8 3-1.700 3.700-1.500C20 22 16.500 24 12 24 5.500 24 0 19 0 12z" fill="#1273c9" />
    <path d="M9 6.500c-4 3-3 9 0 12s8 3 9.500 2c-5 4-12 1-14-4-1.500-4 0-9 4.500-10z" fill="#0c59a4" />
  </svg>,
  <svg width="24" height="24" viewBox="0 0 24 24">
    <path d="M1 0h21l2 2v22H1z" fill="#2440c4" />
    <rect x="6" width="12" height="8" fill="#c9d3e4" />
    <rect x="13" y="1" width="3" height="6" fill="#22357a" />
    <rect x="4" y="11" width="17" height="12" fill="#fbeeee" />
    <path d="M5 14h15M5 17h15M5 20h8" stroke="#e58a8a" />
    <path d="M15 20h4" stroke="#333" strokeWidth="2" />
  </svg>,
  <svg width="23" height="20" viewBox="0 0 24 20">
    <rect x="1" y="1" width="22" height="18" fill="#a9cfe9" />
    <rect x="2.500" y="2.500" width="19" height="15" fill="#62b0ea" />
    <path d="M4 8c3-3 6-1 8-3 2 0 4 2 8 1v4H4z" fill="#d6ecfa" />
    <path d="M2.500 12c5-2 11 1 19-1v6.500h-19z" fill="#2f6079" />
    <path d="M.5 5V.5H5M19 .5h4.500V5M23.500 15v4.500H19M5 19.500H.5V15" stroke="#3a94dc" strokeWidth="1.500" fill="none" />
  </svg>,
  <svg width="18" height="24" viewBox="0 0 18 24">
    <rect width="18" height="24" rx="1" fill="#8b979f" />
    <rect x="2" y="2" width="14" height="4" fill="#38c6f4" />
    <path d="M2 8h4v4H2zM7 8h4v4H7zM12 8h4v4h-4zM2 13h4v4H2zM7 13h4v4H7zM2 18h4v4H2zM7 18h4v4H7z" fill="#c9d0d5" />
    <rect x="12" y="13" width="4" height="9" fill="#0f4f86" />
  </svg>,
  <svg width="20" height="20" viewBox="0 0 20 20" fill="none" stroke="#fff">
    <circle cx="10" cy="10" r="5.700" strokeWidth="2.500" />
    <circle cx="10" cy="10" r="8" strokeWidth="3" strokeDasharray="3.140 3.140" />
  </svg>,
];

function Taskbar() {
  return (
    <div className="flex h-10 shrink-0 bg-gradient-to-r from-[#213740] from-30% to-[#1a2744] to-90% text-white">
      <div className="flex w-12 items-center justify-center">
        <svg width="16" height="16" viewBox="0 0 16 16" fill="#fff">
          <path d="M0 2.200l6.700-.9v6.300H0zM7.500 1.200L16 0v7.600H7.500zM0 8.400h6.700v6.300L0 13.800zM7.500 8.400H16V16l-8.500-1.200z" />
        </svg>
      </div>
      <div className="flex w-[288px] items-center border border-[#bfc3c4] bg-[#f1f1f1] pl-[11px] text-[#222]">
        <Icon size={17} vb={17} w={1.400}>
          <circle cx="10.500" cy="6.500" r="5.300" />
          <path d="M6.800 10.300L1 16" />
        </Icon>
        <span className="ml-[11px] pt-px text-[14.700px] tracking-[-0.350px]">Wyszukaj</span>
        <svg width="80" height="38" viewBox="0 0 80 38" className="ml-auto">
          <defs>
            <radialGradient id="nebula" cx="0.600" cy="0.650" r="0.600">
              <stop offset="0" stopColor="#b0506f" />
              <stop offset=".4" stopColor="#7d70bd" />
              <stop offset=".8" stopColor="#a9abdf" />
              <stop offset="1" stopColor="#ededf4" />
            </radialGradient>
          </defs>
          <path d="M3 38C2 20 18 0 42 0s34 14 38 24v14z" fill="url(#nebula)" />
          <path d="M20 6c14 0 24 8 25 26H8z" fill="#6f72c4" opacity=".4" />
          <path d="M0 38l8-9 10-3 8 2 10-1 14 5 10-1 6-8 6 2 8-5v18z" fill="#17183c" />
          <path d="M28 38l8-5 14-1 16-3-12 5-6 4z" fill="#2c7fc8" />
          <path d="M10 30l8-3 6 3-8 2zM62 26l5-3 3 4z" fill="#55548e" />
          <g fill="#fff">
            <circle cx="45" cy="6" r="1" />
            <circle cx="39" cy="10" r="1" />
            <circle cx="47" cy="14" r="1" />
            <path d="M54 8l1 3 3 .500-3 1-1 3-1-3-3-1 3-.500zM55 22l.800 2 2 .5-2 .8-.8 2-.8-2-2-.8 2-.5z" />
            <circle cx="58" cy="18" r="1" />
            <circle cx="49" cy="28" r="1" />
          </g>
        </svg>
      </div>
      <div className="ml-[2px] flex">
        {taskIcons.map((icon, i) => (
          <div key={i} className={`flex w-[49px] flex-col items-center ${i === 3 ? 'bg-[#4c6068]' : ''}`}>
            <div className="flex flex-1 items-center">{icon}</div>
            {i !== 2 && <div className={`h-[2px] bg-[#76b9ed] ${i === 3 ? 'w-full' : 'w-10'}`} />}
          </div>
        ))}
      </div>
      <div className="ml-auto flex items-center">
        <Cell className="w-6">
          <Icon size={12} vb={12} w={1.300}>
            <path d="M.8 9L6 3.500 11.200 9" />
          </Icon>
        </Cell>
        <Cell className="w-6">
          <Icon size={16} vb={16} w={1.200}>
            <rect x="3" y="4.500" width="7.500" height="7.500" rx="1.500" />
            <path d="M10.500 7.500L13 5.500v5.500l-2.500-2M5 1.500c2-.8 4-.8 5.500 0M5 15c2 .8 4 .8 5.500 0" />
          </Icon>
        </Cell>
        <Cell className="w-6">
          <svg width="16" height="10" viewBox="0 0 16 10" fill="none" stroke="#fff">
            <rect x=".5" y=".5" width="13" height="9" />
            <path d="M15 3.500v3" strokeWidth="1.500" />
            <rect x="2.500" y="2.500" width="5" height="5" fill="#fff" stroke="none" />
          </svg>
        </Cell>
        <Cell className="w-6">
          <Icon size={14} vb={14} w={1.100}>
            <path d="M1 13C1 6 6 1 13 1M4 13c0-5 4-9 9-9M7 13c0-3.500 2.500-6 6-6M10 13c0-2 1-3 3-3" />
          </Icon>
        </Cell>
        <Cell className="w-6">
          <Icon size={17} vb={17} w={1.200}>
            <path d="M1 6.500h2.500L7 3v11l-3.500-3.500H1zM9.500 6c1 1.500 1 3.500 0 5M12 4.500c2 2.500 2 5.500 0 8M14.200 2.500c2.700 3.500 2.700 8.500 0 12" />
          </Icon>
        </Cell>
        <div className="ml-px w-[62px] text-center text-[11.300px] leading-[18px] tracking-[-0.250px]">
          <div>11:38</div>
          <div>01.12.2023</div>
        </div>
        <div className="relative ml-[15px] flex w-[36px] items-center pb-1">
          <svg width="16" height="16" viewBox="0 0 16 16">
            <path d="M0 0h16v13H8l-3 3v-3H0z" fill="#fff" />
            <path d="M3 3.500h10M3 6.500h10M3 9.500h6" stroke="#1a2744" />
          </svg>
          <span className="absolute left-[7px] top-[7px] flex h-4 w-4 items-center justify-center rounded-full border border-[#9a9a9a] bg-[#2c2f36] text-[10px] font-bold">
            3
          </span>
        </div>
        <div className="h-10 w-px bg-[#6b7488]" />
        <div className="w-1" />
      </div>
    </div>
  );
}

export default function App() {
  return (
    <div className="flex h-[900px] w-[1600px] flex-col overflow-hidden bg-[#f7f7f7] font-['Open_Sans','Noto_Sans',sans-serif]">
      <TabStrip />
      <Toolbar />
      <div className="flex h-[790px] shrink-0">
        <AppFrame />
        <EdgeRail />
      </div>
      <Taskbar />
    </div>
  );
}
